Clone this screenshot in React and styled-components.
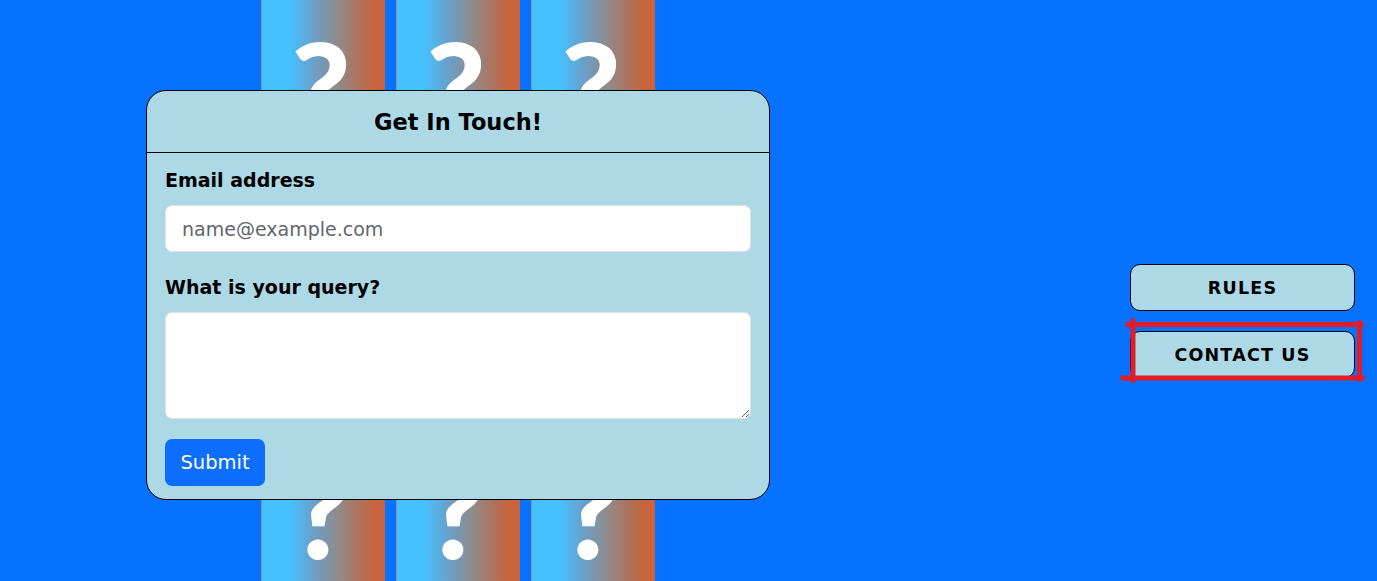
import React from "react";
import styled, { createGlobalStyle } from "styled-components";

const Global = createGlobalStyle`
  html, body { margin: 0; padding: 0; }
  body { background: #0672ff; font-family: "DejaVu Sans", sans-serif; overflow: hidden; }
  * { box-sizing: border-box; }
`;

const Page = styled.div`
  position: relative;
  display: flex;
  width: 100vw;
  height: 100vh;
  overflow: hidden;
  background: #0672ff;
`;

const Board = styled.div`
  display: flex;
  gap: 11px;
  padding-left: 261px;
  height: 100%;
`;

const CardColumn = styled.div`
  width: 124px;
  height: 100%;
  display: flex;
  flex-direction: column;
  justify-content: space-between;
  align-items: center;
  padding: 23px 0 0 0;
  border-left: 1px solid #8a8f99;
  background: linear-gradient(to right, #45c1ff 0%, #45c1ff 22%, #6aa0c8 42%, #918a89 62%, #b07058 80%, #c9643a 92%, #c9643a 100%);
`;

const Mark = styled.span`
  display: block;
  color: #fff;
  font-family: "Lato", sans-serif;
  font-weight: 900;
  font-size: 128px;
  line-height: 1;
  margin-left: -5px;
  margin-bottom: ${(p) => (p.$bottom ? "7px" : "0")};
`;

const Sidebar = styled.div`
  margin-left: auto;
  padding: 264px 22px 0 0;
  display: flex;
  flex-direction: column;
  gap: 20px;
`;

const SideButton = styled.button`
  width: 225px;
  height: 47px;
  border: 1px solid #000;
  border-radius: 10px;
  background: #add8e6;
  color: #000;
  font-family: "DejaVu Sans", sans-serif;
  font-weight: 700;
  font-size: 17.5px;
  letter-spacing: 1.2px;
  cursor: pointer;
`;

const Modal = styled.div`
  position: absolute;
  left: 146px;
  top: 90px;
  width: 624px;
  height: 410px;
  background: #add8e6;
  border: 1px solid #000;
  border-radius: 20px;
  display: flex;
  flex-direction: column;
`;

const ModalHeader = styled.div`
  height: 62px;
  border-bottom: 1px solid #000;
  display: flex;
  align-items: center;
  justify-content: center;
`;

const Title = styled.h2`
  margin: 0;
  font-family: "DejaVu Sans", sans-serif;
  font-weight: 700;
  font-size: 22.5px;
  color: #000;
`;

const ModalBody = styled.form`
  padding: 12px 18px 12px 18px;
  display: flex;
  flex-direction: column;
`;

const Label = styled.label`
  display: block;
  font-family: "DejaVu Sans", sans-serif;
  font-weight: 700;
  font-size: 19px;
  line-height: 30px;
  color: #000;
  margin-bottom: 10px;
  margin-top: ${(p) => (p.$gap ? "20px" : "0")};
`;

const Input = styled.input`
  width: 100%;
  height: 47px;
  border: 1px solid #dee2e6;
  border-radius: 7px;
  background: #fff;
  padding: 0 16px;
  font-family: "DejaVu Sans", sans-serif;
  font-size: 19px;
  color: #212529;
  outline: none;
  &::placeholder { color: #5f666d; }
`;

const TextArea = styled.textarea`
  width: 100%;
  height: 107px;
  border: 1px solid #dee2e6;
  border-radius: 7px;
  background: #fff;
  padding: 8px 16px;
  font-family: "DejaVu Sans", sans-serif;
  font-size: 19px;
  outline: none;
  resize: vertical;
  display: block;
`;

const Submit = styled.button`
  margin-top: 20px;
  align-self: flex-start;
  width: 100px;
  height: 47px;
  border: none;
  border-radius: 7px;
  background: #0d6efd;
  color: #fff;
  font-family: "DejaVu Sans", sans-serif;
  font-size: 19.5px;
  cursor: pointer;
`;

const Annotation = styled.svg`
  position: absolute;
  left: 1118px;
  top: 316px;
  pointer-events: none;
`;

export default function App() {
  const cols = [0, 1, 2];
  return (
    <>
      <Global />
      <Page>
        <Board>
          {cols.map((c) => (
            <CardColumn key={c}>
              <Mark>?</Mark>
              <Mark $bottom>?</Mark>
            </CardColumn>
          ))}
        </Board>
        <Sidebar>
          <SideButton>RULES</SideButton>
          <SideButton>CONTACT US</SideButton>
        </Sidebar>
        <Modal>
          <ModalHeader>
            <Title>Get In Touch!</Title>
          </ModalHeader>
          <ModalBody onSubmit={(e) => e.preventDefault()}>
            <Label htmlFor="email">Email address</Label>
            <Input id="email" type="email" placeholder="name@example.com" />
            <Label $gap htmlFor="query">What is your query?</Label>
            <TextArea id="query" />
            <Submit type="submit">Submit</Submit>
          </ModalBody>
        </Modal>
        <Annotation width="250" height="70" viewBox="0 0 250 70">
          <g stroke="#e21d2a" strokeWidth="5" strokeLinecap="square">
            <line x1="15" y1="5" x2="15" y2="64" />
            <line x1="10" y1="8.5" x2="243" y2="8.5" />
            <line x1="241.5" y1="7" x2="241.5" y2="63" />
            <line x1="5" y1="62" x2="244" y2="62" />
          </g>
        </Annotation>
      </Page>
    </>
  );
}
